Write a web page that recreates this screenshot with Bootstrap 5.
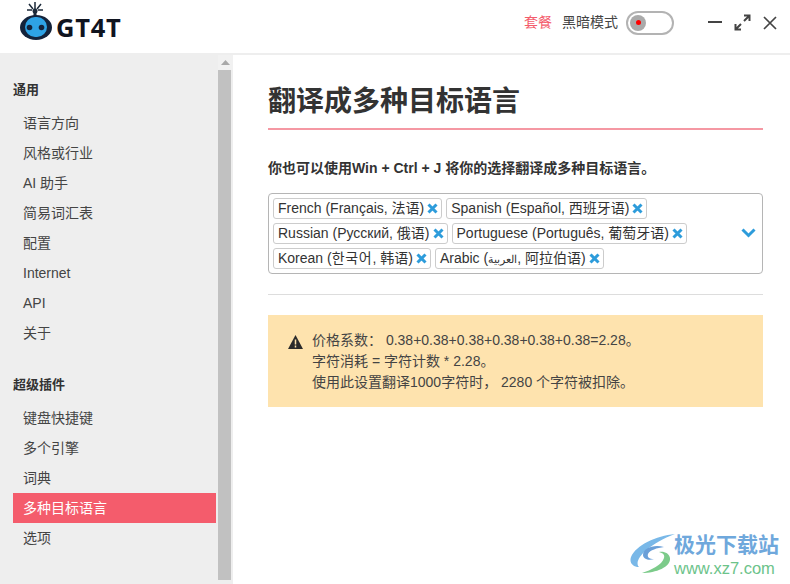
<!DOCTYPE html>
<html lang="zh">
<head>
<meta charset="utf-8">
<title>GT4T</title>
<link href="https://cdn.jsdelivr.net/npm/bootstrap@5.3.0/dist/css/bootstrap.min.css" rel="stylesheet">
<style>
html,body{height:584px;overflow:hidden}
body{font-family:"Liberation Sans","Noto Sans CJK SC",sans-serif;font-size:14px;color:#333;background:#fff}
.app-top{height:55px;border-bottom:2px solid #eee;padding:0 13px 8px 19px}
.logo-svg{margin-bottom:3px;flex:none}
.logo-text{font-family:"Open Sans","DejaVu Sans",sans-serif;font-weight:700;font-size:25.5px;color:#10141f;letter-spacing:.7px;line-height:1;margin-left:1px;margin-top:10px}
.plan-link{color:#f45c6c;font-size:14px;margin-right:10px;text-decoration:none}
.dark-label{color:#444;font-size:14px;margin-right:8px}
.toggle-track{width:48px;height:24px;border:2px solid #b3b3b3;border-radius:12px;padding:2px;margin-right:34px;background:#fff}
.toggle-knob{width:16px;height:16px;border-radius:50%;background:#aaa}
.toggle-dot{width:5px;height:5px;border-radius:50%;background:#f00}
.win-icons{gap:12px}
.app-body{height:529px}
.side-col{width:233px;background:#eee;flex:none}
.side-inner{width:216px;padding:24px 0 0 13px;flex:none}
.side-head{font-weight:700;font-size:13px;color:#333;line-height:22px;margin-bottom:7px}
.side-item{display:block;height:30px;line-height:30px;padding-left:10px;color:#444;font-size:14px;text-decoration:none}
.side-item.on{background:#f45c6c;color:#fff}
.side-gap{height:26px}
.sbar{width:15px;margin-left:2px;background:#eee;flex:none}
.sbar-up{height:15px;display:flex;align-items:center;justify-content:center;background:#f1f1f1}
.sbar-thumb{width:13px;height:510px;background:#c1c1c1}
.main-col{padding:30px 27px 0 35px;width:557px}
.page-title{font-size:28px;font-weight:700;color:#333;line-height:34px;margin:0;padding-bottom:10px;border-bottom:2px solid #f598a3;height:45px}
.page-note{font-weight:700;font-size:14px;margin:28px 0 0;line-height:20px;color:#333}
.lang-box{height:81px;margin-top:15px;border:1px solid #b5b5b5;border-radius:4px;padding:4px 4px;position:relative}
.tag-row{height:25px}
.lang-tag{height:21px;border:1px solid #ccc;border-radius:3px;padding:0 3px 0 4px;font-size:14px;line-height:19px;color:#333;margin-right:4px;white-space:nowrap}
.tag-x{margin-left:3px;flex:none}
.ko-run{letter-spacing:.7px}
.ar-run{font-size:11px}
.drop-chev{position:absolute;right:6px;top:34px}
.sep-line{border:0;border-top:1px solid #ddd;opacity:1;margin:20px 0}
.cost-box{height:92px;background:#fee3ae;padding:15px 20px;font-size:14px;line-height:21px;color:#444;border-radius:0;margin:0;border:0}
.warn-ico{margin-top:5px;margin-right:9px;flex:none}
.wm{position:absolute;left:630px;top:524px;width:160px;height:56px}
.wm-swirl{position:absolute;left:0;top:9px}
.wm-name{font-size:21px;font-weight:700;color:#6fa8dc;line-height:28px;position:absolute;left:44px;top:7px;white-space:nowrap}
.wm-url{font-size:16.500px;color:#6cc38a;line-height:18px;position:absolute;left:44px;top:35px}
</style>
</head>
<body>
<div class="app-top d-flex align-items-center">
  <svg class="logo-svg" width="36" height="40" viewBox="0 0 36 40" aria-hidden="true">
    <g stroke="#1c2a3a" stroke-width="1.500" fill="none"><path d="M16 1v8M10 3l4 5M22 3l-4 5M8 9h5M19 9h5"/></g>
    <circle cx="16" cy="10" r="2.500" fill="#1c2a3a"/><rect x="14.500" y="10" width="3" height="5" fill="#1c2a3a"/>
    <ellipse cx="17" cy="26.500" rx="16" ry="12.500" fill="#14233b"/>
    <rect x="6" y="16" width="22" height="20" rx="10" fill="#2ea3e6"/>
    <circle cx="10.500" cy="26.500" r="2.800" fill="#14233b"/><circle cx="22.500" cy="26.500" r="2.800" fill="#14233b"/>
  </svg>
  <div class="logo-text">GT4T</div>
  <div class="ms-auto d-flex align-items-center">
    <a class="plan-link" href="#">套餐</a>
    <span class="dark-label">黑暗模式</span>
    <div class="toggle-track d-flex align-items-center"><div class="toggle-knob d-flex align-items-center justify-content-center"><div class="toggle-dot"></div></div></div>
    <div class="win-icons d-flex align-items-center">
      <svg width="14" height="16" viewBox="0 0 14 16" aria-hidden="true"><path d="M0 7h14" stroke="#444" stroke-width="2"/></svg>
      <svg width="17" height="17" viewBox="0 0 17 17" aria-hidden="true"><path d="M1.500 10v5.500H7M15.500 7V1.500H10M1.500 15.500L7 10M15.500 1.500L10 7" stroke="#444" stroke-width="2" fill="none"/></svg>
      <svg width="14" height="14" viewBox="0 0 14 14" aria-hidden="true"><path d="M1 1l12 12M13 1L1 13" stroke="#444" stroke-width="1.700"/></svg>
    </div>
  </div>
</div>
<div class="app-body d-flex">
  <div class="side-col d-flex">
    <nav class="side-inner">
      <div class="side-head">通用</div>
      <a class="side-item" href="#">语言方向</a>
      <a class="side-item" href="#">风格或行业</a>
      <a class="side-item" href="#">AI 助手</a>
      <a class="side-item" href="#">简易词汇表</a>
      <a class="side-item" href="#">配置</a>
      <a class="side-item" href="#">Internet</a>
      <a class="side-item" href="#">API</a>
      <a class="side-item" href="#">关于</a>
      <div class="side-gap"></div>
      <div class="side-head">超级插件</div>
      <a class="side-item" href="#">键盘快捷键</a>
      <a class="side-item" href="#">多个引擎</a>
      <a class="side-item" href="#">词典</a>
      <a class="side-item on" href="#">多种目标语言</a>
      <a class="side-item" href="#">选项</a>
    </nav>
    <div class="sbar">
      <div class="sbar-up"><svg width="9" height="5" viewBox="0 0 9 5" aria-hidden="true"><path d="M4.500 0L9 5H0z" fill="#a8a8a8"/></svg></div>
      <div class="sbar-thumb"></div>
    </div>
  </div>
  <main class="main-col">
    <h1 class="page-title">翻译成多种目标语言</h1>
    <p class="page-note">你也可以使用Win + Ctrl + J 将你的选择翻译成多种目标语言。</p>
    <div class="lang-box">
      <div class="tag-row d-flex">
        <span class="lang-tag d-inline-flex align-items-center">French (Français, 法语)<svg class="tag-x" width="11" height="11" viewBox="0 0 11 11"><path d="M1.500 1.500l8 8M9.500 1.500l-8 8" stroke="#2d9cdb" stroke-width="3"/></svg></span>
        <span class="lang-tag d-inline-flex align-items-center">Spanish (Español, 西班牙语)<svg class="tag-x" width="11" height="11" viewBox="0 0 11 11"><path d="M1.500 1.500l8 8M9.500 1.500l-8 8" stroke="#2d9cdb" stroke-width="3"/></svg></span>
      </div>
      <div class="tag-row d-flex">
        <span class="lang-tag d-inline-flex align-items-center">Russian (Русский, 俄语)<svg class="tag-x" width="11" height="11" viewBox="0 0 11 11"><path d="M1.500 1.500l8 8M9.500 1.500l-8 8" stroke="#2d9cdb" stroke-width="3"/></svg></span>
        <span class="lang-tag d-inline-flex align-items-center">Portuguese (Português, 葡萄牙语)<svg class="tag-x" width="11" height="11" viewBox="0 0 11 11"><path d="M1.500 1.500l8 8M9.500 1.500l-8 8" stroke="#2d9cdb" stroke-width="3"/></svg></span>
      </div>
      <div class="tag-row d-flex">
        <span class="lang-tag d-inline-flex align-items-center"><span>Korean (<span class="ko-run">한국어</span>, 韩语)</span><svg class="tag-x" width="11" height="11" viewBox="0 0 11 11"><path d="M1.500 1.500l8 8M9.500 1.500l-8 8" stroke="#2d9cdb" stroke-width="3"/></svg></span>
        <span class="lang-tag d-inline-flex align-items-center"><span>Arabic (<span class="ar-run">العربية</span>, 阿拉伯语)</span><svg class="tag-x" width="11" height="11" viewBox="0 0 11 11"><path d="M1.500 1.500l8 8M9.500 1.500l-8 8" stroke="#2d9cdb" stroke-width="3"/></svg></span>
      </div>
      <svg class="drop-chev" width="15" height="10" viewBox="0 0 15 10" aria-hidden="true"><path d="M1.500 1.500l6 6 6-6" stroke="#2d9cdb" stroke-width="3" fill="none"/></svg>
    </div>
    <hr class="sep-line">
    <div class="cost-box d-flex">
      <svg class="warn-ico" width="15" height="14" viewBox="0 0 15 14" aria-hidden="true"><path d="M7.500 0L15 14H0z" fill="#2b2b2b"/><path d="M7.500 4.500v5M7.500 10.500v2" stroke="#fee3ae" stroke-width="1.500"/></svg>
      <div>价格系数： 0.38+0.38+0.38+0.38+0.38+0.38=2.28。<br>字符消耗 = 字符计数 * 2.28。<br>使用此设置翻译1000字符时， 2280 个字符被扣除。</div>
    </div>
  </main>
</div>
<div class="wm">
  <svg class="wm-swirl" width="46" height="42" viewBox="0 0 46 42" aria-hidden="true">
    <path d="M45 1C26 3 6 12 1 24c-2 6 2 10 8 10C3 28 16 12 45 1z" fill="#79b8e8"/>
    <path d="M34 14c-10-3-21 1-21 8 0 4 6 6 11 4-5 0-7-2-6-5 2-4 9-6 16-7z" fill="#6a9fd8"/>
    <path d="M12 40c14 0 29-6 28-15-1-5-6-7-11-6 4 1 6 3 5 6-2 7-13 12-22 15z" fill="#7ccb8a"/>
  </svg>
  <div class="wm-name">极光下载站</div>
  <div class="wm-url">www.xz7.com</div>
</div>
</body>
</html>
